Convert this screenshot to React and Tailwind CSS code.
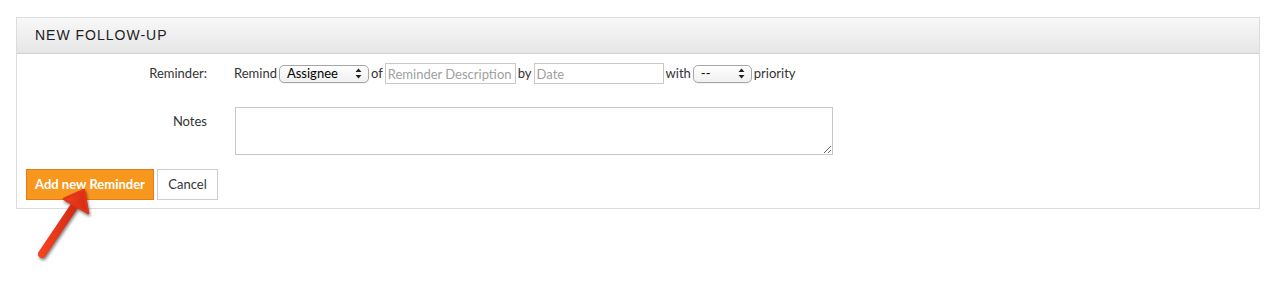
import React from 'react';

function FakeSelect({ value, width }) {
  return (
    <div
      className={`${width} h-[18px] flex items-center justify-between pl-[7px] pr-[6px] rounded-[5px] border border-[#a6a6a6] bg-gradient-to-b from-white to-[#f0f0f0] text-[13px] text-black leading-none shadow-[0_1px_0_rgba(0,0,0,0.05)]`}
    >
      <span>{value}</span>
      <svg width="7" height="11" viewBox="0 0 7 11" className="shrink-0">
        <path d="M3.5 0.5 L6.5 4 L0.5 4 Z" fill="#222" />
        <path d="M3.5 10.5 L6.5 7 L0.5 7 Z" fill="#222" />
      </svg>
    </div>
  );
}

function App() {
  return (
    <div className="relative w-[1276px] h-[308px] bg-white font-['Lato','Noto_Sans',sans-serif] text-[13px] text-[#333]">
      <div className="mx-4 pt-[17px]">
        <div className="border border-[#dcdcdc] bg-white">
          <div className="h-[36px] flex items-center pl-[18px] border-b border-[#cfcfcf] bg-gradient-to-b from-[#f8f8f8] to-[#e6e6e6]">
            <h2 className="font-['Liberation_Sans',Arial,sans-serif] text-[14px] tracking-[1px] text-[#222]">
              NEW FOLLOW-UP
            </h2>
          </div>

          <div className="pt-[9px]">
            <div className="flex items-center">
              <div className="w-[190px] text-right">Reminder:</div>
              <div className="ml-[27px] flex items-center gap-[2px]">
                <span>Remind</span>
                <FakeSelect value="Assignee" width="w-[90px]" />
                <span>of</span>
                <input
                  placeholder="Reminder Description"
                  className="w-[131px] h-[21px] px-[2px] border border-[#c8c8c8] text-[13px] placeholder:text-[#a0a0a0] outline-none"
                />
                <span>by</span>
                <input
                  placeholder="Date"
                  className="w-[130px] h-[21px] px-[2px] border border-[#c8c8c8] text-[13px] placeholder:text-[#a0a0a0] outline-none"
                />
                <span>with</span>
                <FakeSelect value="--" width="w-[59px]" />
                <span>priority</span>
              </div>
            </div>

            <div className="flex items-start mt-[23px]">
              <div className="w-[190px] text-right pt-[5px]">Notes</div>
              <textarea className="ml-[28px] w-[598px] h-[48px] border border-[#c8c8c8] outline-none resize-y" />
            </div>

            <div className="flex gap-[3px] pl-[9px] pt-[14px] pb-[8px]">
              <button className="h-[31px] w-[128px] bg-[#f8971e] border border-[#e67a1a] text-white font-bold text-[13px]">
                Add new Reminder
              </button>
              <button className="h-[31px] w-[61px] bg-white border border-[#cccccc] text-[#333] text-[13px]">
                Cancel
              </button>
            </div>
          </div>
        </div>
      </div>

      <svg
        className="absolute left-0 top-0 drop-shadow-[1px_2px_1.5px_rgba(0,0,0,0.5)]"
        width="120"
        height="280"
        viewBox="0 0 120 280"
      >
        <defs>
          <linearGradient id="arrowFill" x1="0" y1="0" x2="1" y2="0">
            <stop offset="0" stopColor="#f4421f" />
            <stop offset="1" stopColor="#d42a12" />
          </linearGradient>
        </defs>
        <line x1="42" y1="254" x2="75" y2="205" stroke="url(#arrowFill)" strokeWidth="8" strokeLinecap="round" />
        <path d="M84 190 L88 213 L64 199 Z" fill="url(#arrowFill)" stroke="#e2351a" strokeWidth="2.5" strokeLinejoin="round" />
      </svg>
    </div>
  );
}

export default App;
